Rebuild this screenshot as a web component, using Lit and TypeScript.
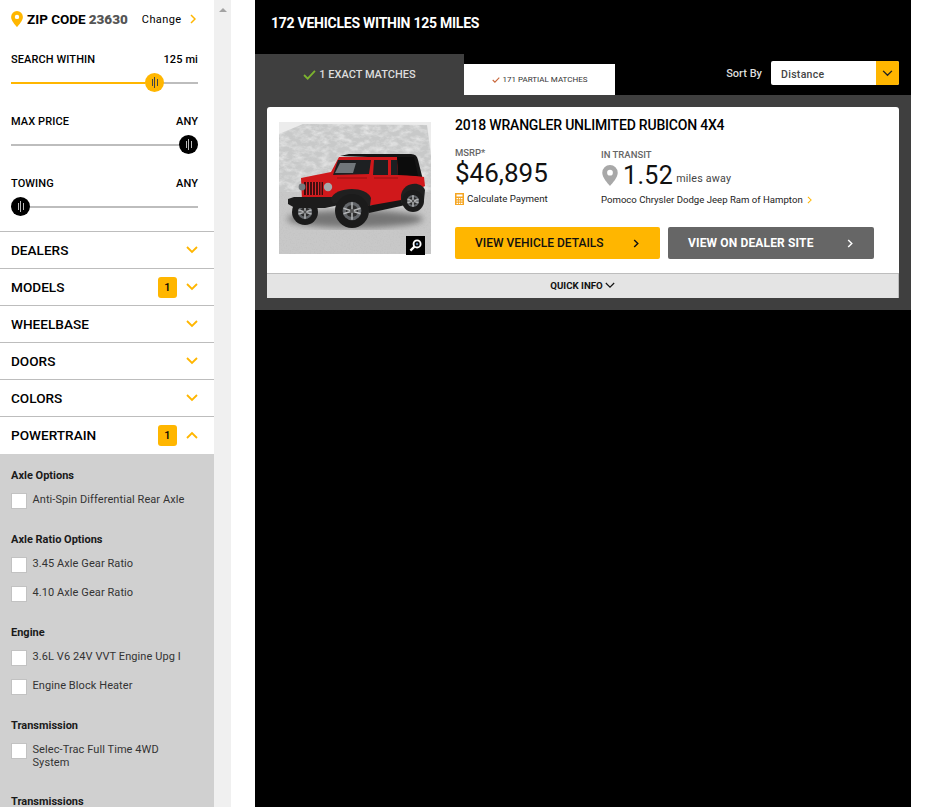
import { LitElement, css, html, svg } from 'lit';
import { customElement } from 'lit/decorators.js';

const chevron = (up = false) => html`
  <svg class="chev" viewBox="0 0 12 8" width="12" height="8">
    <path d=${up ? 'M1 7 6 2l5 5' : 'M1 1l5 5 5-5'} fill="none" stroke="#ffb600" stroke-width="1.8"/>
  </svg>
`;

const pin = (color: string, w: number, h: number) => html`
  <svg viewBox="0 0 14 19" width=${w} height=${h}>
    <path fill-rule="evenodd" fill=${color}
      d="M7 0a7 7 0 0 0-7 7c0 4.4 4.8 9.4 7 12 2.2-2.6 7-7.6 7-12a7 7 0 0 0-7-7zm0 4.4a2.6 2.6 0 1 1 0 5.2 2.6 2.6 0 0 1 0-5.2z"/>
  </svg>
`;

const check = (color: string, w: number, h: number) => html`
  <svg viewBox="0 0 14 11" width=${w} height=${h}>
    <path d="M1 5.5 5 9.5 13 1" fill="none" stroke=${color} stroke-width="2"/>
  </svg>
`;

const wheel = (x: number, y: number, r: number) => svg`
  <circle cx=${x} cy=${y} r=${r} fill="#1b1b1b"/>
  <circle cx=${x} cy=${y} r=${r * 0.55} fill="#63666a"/>
  <circle cx=${x} cy=${y} r=${r * 0.36} fill="#2c2c2c"/>
  <path d="M${x} ${y - r * 0.52}V${y + r * 0.52}M${x - r * 0.5} ${y - r * 0.16}L${x + r * 0.5} ${y + r * 0.16}M${x + r * 0.5} ${y - r * 0.16}L${x - r * 0.5} ${y + r * 0.16}" stroke="#b4b6b8" stroke-width="1.5"/>
  <circle cx=${x} cy=${y} r=${r * 0.12} fill="#555"/>
`;

const jeep = html`
  <svg class="photo" viewBox="0 0 152 132" width="152" height="132">
    <defs>
      <filter id="rock" x="0" y="0" width="100%" height="100%">
        <feTurbulence type="fractalNoise" baseFrequency=".12 .2" numOctaves="4" seed="7"/>
        <feColorMatrix values="0 0 0 0 1  0 0 0 0 1  0 0 0 0 1  1.1 0 0 0 -.42"/>
        <feComposite in2="SourceGraphic" operator="in"/>
      </filter>
      <filter id="grit" x="0" y="0" width="100%" height="100%">
        <feTurbulence type="fractalNoise" baseFrequency=".7" numOctaves="2" seed="3"/>
        <feColorMatrix values="0 0 0 0 .5  0 0 0 0 .5  0 0 0 0 .5  1 0 0 0 -.45"/>
        <feComposite in2="SourceGraphic" operator="in"/>
      </filter>
      <filter id="soft"><feGaussianBlur stdDeviation="3"/></filter>
    </defs>
    <rect width="152" height="132" fill="#ececec"/>
    <path d="M0 12 24 2l124 1 4 30v40H0z" fill="#c8c9c9"/>
    <path d="M0 12 24 2l124 1 4 30v40H0z" fill="#fff" filter="url(#rock)"/>
    <rect y="70" width="152" height="62" fill="#c8c8c8"/>
    <rect y="70" width="152" height="62" fill="#fff" filter="url(#grit)"/>
    <ellipse cx="76" cy="97" rx="68" ry="9" fill="#767676" filter="url(#soft)"/>

    ${wheel(26, 90, 13)}
    <path d="M61 34 70 32h62q6 0 7 6l5 20h-27V36z" fill="#141414"/>
    <path d="M22 56 52 50l8-15h58l2 17 25 3 1 9-15 8-9 9-36 3-26-12-10 8-27-2z" fill="#d0181b"/>
    <path d="M59 38h33l-2 14-36 1zM95 38h14v15H94zM112 38h6l1 15h-7z" fill="#1d2022"/>
    <path d="M61 41h16l-3 10H56z" fill="#70767a"/>
    <path d="M118 35h17l4 19-20-1z" fill="#0c0c0c"/>
    <path d="M58 56h30M95 56h24" stroke="#8a0e10" stroke-width=".8"/>
    <path d="M25 60h19v13H25z" fill="#3a0c0d"/>
    <path d="M27.500 60v13M30.500 60v13M33.500 60v13M36.500 60v13M39.500 60v13M42 60v13" stroke="#d6262a" stroke-width="1.100"/>
    <circle cx="23" cy="65" r="3.400" fill="#767a7d"/>
    <circle cx="49" cy="65" r="4.200" fill="#a5a8aa"/>
    <path d="M9 77l6-2h44l1 8-14 3H16l-7-4z" fill="#1c1c1c"/>
    <path d="M52 77c3-12 35-14 40-1l-1 8-37-3z" fill="#202020"/>
    <path d="M88 84l34-6 22-5v5l-22 6-32 7z" fill="#171717"/>
    <path d="M122 73c2-13 20-15 24-5l-1 10-23 3z" fill="#202020"/>
    ${wheel(134, 79, 11)}
    ${wheel(73, 89, 17)}
  </svg>
`;

@customElement('app-root')
export class AppRoot extends LitElement {
  static styles = css`
    :host {
      display: block;
      height: 807px;
      overflow: hidden;
      background: #fff;
      font-family: Roboto, 'Liberation Sans', sans-serif;
      color: #000;
    }
    .page { display: flex; height: 807px; }
    .side { width: 214px; flex: none; overflow: hidden; }
    .bar { width: 17px; flex: none; background: #f0f0f0; display: flex; justify-content: center; padding-top: 8px; box-sizing: border-box; }
    .bar i { width: 0; height: 0; border: 4px solid transparent; border-top: 0; border-bottom: 4px solid #a3a3a3; }
    .main { width: 656px; flex: none; margin-left: 24px; background: #000; }

    .zip { display: flex; align-items: center; height: 38px; padding-left: 11px; font-size: 13.5px; font-weight: 700; }
    .zip svg { margin-right: 4px; }
    .zip b { color: #555; margin-left: 3px; }
    .zip .chg { margin-left: 14px; font-size: 11px; font-weight: 400; letter-spacing: .4px; }
    .zip .chg + svg { margin: 0 0 0 8px; }

    .sliders { padding: 0 16px 0 11px; height: 193px; }
    .sl { height: 62px; }
    .sl-top { display: flex; justify-content: space-between; font-size: 11px; font-weight: 500; line-height: 13px; padding-top: 15px; letter-spacing: .1px; }
    .track { position: relative; height: 2px; margin-top: 16px; background: #bdbdbd; }
    .fill { height: 2px; background: #ffb600; }
    .thumb { position: absolute; top: -9px; width: 19px; height: 19px; border-radius: 50%; background: #000; display: flex; align-items: center; justify-content: center; gap: 1.5px; }
    .thumb.on { background: #ffb600; }
    .thumb i { width: 1px; height: 7px; background: #bbb; }
    .thumb i:nth-child(2) { height: 11px; }
    .thumb.on i { background: #444; }

    .acc { display: flex; align-items: center; height: 36px; border-top: 1px solid #bdbdbd; padding: 0 16px 0 11px; font-size: 13.6px; font-weight: 500; }
    .acc span { flex: 1; }
    .acc em { width: 19px; height: 21px; margin-right: 9px; background: #ffb600; border-radius: 3px; font-style: normal; font-size: 11px; display: flex; align-items: center; justify-content: center; }

    .opts { background: #d0d0d0; margin-top: 1px; padding: 15px 11px 0; height: 360px; }
    .grp { margin-bottom: 24px; }
    .grp h4 { margin: 0 0 11px; font-size: 11px; line-height: 13px; font-weight: 700; color: #1a1a1a; }
    .opt { display: flex; gap: 5.5px; margin-bottom: 13px; font-size: 11px; line-height: 13px; letter-spacing: .08px; color: #333; }
    .opt:last-child { margin-bottom: 0; }
    .opt span { max-width: 156px; padding-bottom: 2px; }
    .opt i { width: 16px; height: 16px; box-sizing: border-box; flex: none; background: #fff; border: 1px solid #c2c2c2; }

    .head { height: 54px; padding: 15px 16px 0; box-sizing: border-box; color: #fff; font-size: 14px; font-weight: 700; line-height: 17px; letter-spacing: -.25px; }
    .tabs { display: flex; align-items: flex-end; height: 41px; }
    .tab { display: flex; align-items: center; justify-content: center; gap: 3px; }
    .exact { width: 209px; height: 41px; background: #3f3f3f; color: #ddd; font-size: 11px; font-weight: 500; }
    .partial { width: 151px; height: 31px; background: #fff; color: #333; font-size: 8px; box-sizing: border-box; }
    .sort { display: flex; align-items: center; margin: 0 12px 10px auto; color: #ddd; font-size: 11px; font-weight: 500; gap: 9px; }
    .select { display: flex; width: 128px; height: 24px; border-radius: 2px; overflow: hidden; background: #fff; color: #444; font-size: 10.5px; letter-spacing: .3px; }
    .select span { flex: 1; padding: 2px 0 0 10px; line-height: 24px; }
    .select b { width: 23px; background: #ffb600; display: flex; align-items: center; justify-content: center; }

    .panel { background: #3f3f3f; padding: 12px; height: 215px; box-sizing: border-box; }
    .card { background: #fff; border-radius: 3px 3px 0 0; height: 191px; display: flex; flex-direction: column; }
    .body { display: flex; flex: 1; padding: 15px 0 0 12px; }
    .pic { position: relative; width: 152px; height: 132px; }
    .photo { display: block; }
    .zoom { position: absolute; right: 6px; bottom: -1px; width: 19px; height: 19px; background: #000; display: flex; align-items: center; justify-content: center; }
    .info { margin-left: 24px; }
    h2 { margin: -4px 0 0; font-size: 14px; line-height: 15px; font-weight: 500; letter-spacing: -.2px; color: #000; }
    .cols { display: flex; margin-top: 14px; height: 66px; }
    .c1 { width: 146px; }
    .lbl { font-size: 9.5px; line-height: 11px; font-weight: 500; color: #666; }
    .transit { padding-top: 2px; }
    .price { font-size: 26px; line-height: 30px; color: #111; }
    .calc { display: flex; align-items: center; gap: 3px; font-size: 9.7px; color: #222; margin-top: 5px; line-height: 12px; }
    .dist { display: flex; align-items: center; height: 30px; }
    .dist svg { margin-left: 1px; }
    .dist strong { font-size: 25px; font-weight: 400; letter-spacing: .35px; margin-left: 5px; color: #111; }
    .dist small { font-size: 10.7px; color: #444; margin: 6px 0 0 3px; letter-spacing: .2px; }
    .dealer { display: flex; align-items: center; gap: 4px; font-size: 9.6px; color: #222; margin-top: 4px; line-height: 12px; }
    .btns { display: flex; gap: 8px; margin-top: 14px; }
    .btn { display: flex; align-items: center; height: 32px; border-radius: 2px; font-size: 12px; box-sizing: border-box; }
    .b1 { width: 205px; background: #ffb600; color: #111; padding: 0 21px 0 20px; font-weight: 500; }
    .b2 { width: 206px; background: #666; color: #fff; padding: 0 21px 0 20px; font-weight: 700; letter-spacing: .15px; }
    .btn span { flex: 1; }
    .quick { height: 25px; box-sizing: border-box; background: #e4e4e4; border-top: 1px solid #bdbdbd; border-right: 1px solid #bdbdbd; display: flex; align-items: center; justify-content: center; gap: 2px; font-size: 9.7px; font-weight: 700; color: #111; padding-bottom: 1px; }
  `;

  private slider(label: string, value: string, pos: number, on: boolean) {
    return html`
      <div class="sl">
        <div class="sl-top"><span>${label}</span><span>${value}</span></div>
        <div class="track">
          ${on ? html`<div class="fill" style="width:${pos}px"></div>` : ''}
          <div class="thumb ${on ? 'on' : ''}" style="left:${pos}px"><i></i><i></i><i></i></div>
        </div>
      </div>
    `;
  }

  private row(label: string, count = false, open = false) {
    return html`
      <div class="acc"><span>${label}</span>${count ? html`<em>1</em>` : ''}${chevron(open)}</div>
    `;
  }

  private group(title: string, opts: string[]) {
    return html`
      <div class="grp">
        <h4>${title}</h4>
        ${opts.map(o => html`<div class="opt"><i></i><span>${o}</span></div>`)}
      </div>
    `;
  }

  render() {
    return html`
      <div class="page">
        <aside class="side">
          <div class="zip">
            ${pin('#ffb600', 12, 16)}
            ZIP CODE <b>23630</b>
            <span class="chg">Change</span>
            <svg viewBox="0 0 6 10" width="6" height="10"><path d="M1 1l4 4-4 4" fill="none" stroke="#ffb600" stroke-width="1.5"/></svg>
          </div>
          <div class="sliders">
            ${this.slider('SEARCH WITHIN', '125 mi', 134, true)}
            ${this.slider('MAX PRICE', 'ANY', 168, false)}
            ${this.slider('TOWING', 'ANY', 0, false)}
          </div>
          ${this.row('DEALERS')}
          ${this.row('MODELS', true)}
          ${this.row('WHEELBASE')}
          ${this.row('DOORS')}
          ${this.row('COLORS')}
          ${this.row('POWERTRAIN', true, true)}
          <div class="opts">
            ${this.group('Axle Options', ['Anti-Spin Differential Rear Axle'])}
            ${this.group('Axle Ratio Options', ['3.45 Axle Gear Ratio', '4.10 Axle Gear Ratio'])}
            ${this.group('Engine', ['3.6L V6 24V VVT Engine Upg I', 'Engine Block Heater'])}
            ${this.group('Transmission', ['Selec-Trac Full Time 4WD System'])}
            ${this.group('Transmissions', [])}
          </div>
        </aside>
        <div class="bar"><i></i></div>
        <main class="main">
          <div class="head">172 VEHICLES WITHIN 125 MILES</div>
          <div class="tabs">
            <div class="tab exact">${check('#7cb32e', 13, 10)} 1 EXACT MATCHES</div>
            <div class="tab partial">${check('#c8663a', 8, 6)} 171 PARTIAL MATCHES</div>
            <div class="sort">
              Sort By
              <div class="select">
                <span>Distance</span>
                <b><svg viewBox="0 0 12 8" width="11" height="7"><path d="M1 1l5 5 5-5" fill="none" stroke="#222" stroke-width="1.6"/></svg></b>
              </div>
            </div>
          </div>
          <div class="panel">
            <div class="card">
              <div class="body">
                <div class="pic">
                  ${jeep}
                  <div class="zoom">
                    <svg viewBox="0 0 14 14" width="13" height="13">
                      <circle cx="8.7" cy="5.3" r="3.8" fill="none" stroke="#fff" stroke-width="2"/>
                      <path d="M5.8 8.2 1.5 12.5" stroke="#fff" stroke-width="2.4"/>
                      <circle cx="8.7" cy="5.3" r="1.3" fill="#5a7fa8"/>
                    </svg>
                  </div>
                </div>
                <div class="info">
                  <h2>2018 WRANGLER UNLIMITED RUBICON 4X4</h2>
                  <div class="cols">
                    <div class="c1">
                      <div class="lbl">MSRP*</div>
                      <div class="price">$46,895</div>
                      <div class="calc">
                        <svg viewBox="0 0 9 12" width="9" height="12">
                          <path fill="#f5a623" fill-rule="evenodd" d="M0 0h9v12H0zM1.500 1.500v2h6v-2zM1.500 5v1.200h1.500V5zM3.800 5v1.200h1.500V5zM6 5v1.200h1.500V5zM1.500 7.400v1.200h1.500V7.400zM3.800 7.400v1.200h1.500V7.400zM6 7.400v1.200h1.500V7.400zM1.500 9.700v1.200h1.500V9.700zM3.800 9.700v1.200h1.500V9.700zM6 9.700v1.200h1.500V9.700z"/>
                        </svg>
                        Calculate Payment
                      </div>
                    </div>
                    <div class="transit">
                      <div class="lbl">IN TRANSIT</div>
                      <div class="dist">
                        ${pin('#a8a8a8', 16, 21)}
                        <strong>1.52</strong><small>miles away</small>
                      </div>
                      <div class="dealer">
                        Pomoco Chrysler Dodge Jeep Ram of Hampton
                        <svg viewBox="0 0 6 10" width="5" height="8"><path d="M1 1l4 4-4 4" fill="none" stroke="#ffb600" stroke-width="1.3"/></svg>
                      </div>
                    </div>
                  </div>
                  <div class="btns">
                    <div class="btn b1">
                      <span>VIEW VEHICLE DETAILS</span>
                      <svg viewBox="0 0 6 10" width="6" height="9"><path d="M1 1l4 4-4 4" fill="none" stroke="#111" stroke-width="1.6"/></svg>
                    </div>
                    <div class="btn b2">
                      <span>VIEW ON DEALER SITE</span>
                      <svg viewBox="0 0 6 10" width="6" height="9"><path d="M1 1l4 4-4 4" fill="none" stroke="#fff" stroke-width="1.6"/></svg>
                    </div>
                  </div>
                </div>
              </div>
              <div class="quick">
                QUICK INFO
                <svg viewBox="0 0 12 8" width="10" height="7"><path d="M1 1l5 5 5-5" fill="none" stroke="#111" stroke-width="1.4"/></svg>
              </div>
            </div>
          </div>
        </main>
      </div>
    `;
  }
}
